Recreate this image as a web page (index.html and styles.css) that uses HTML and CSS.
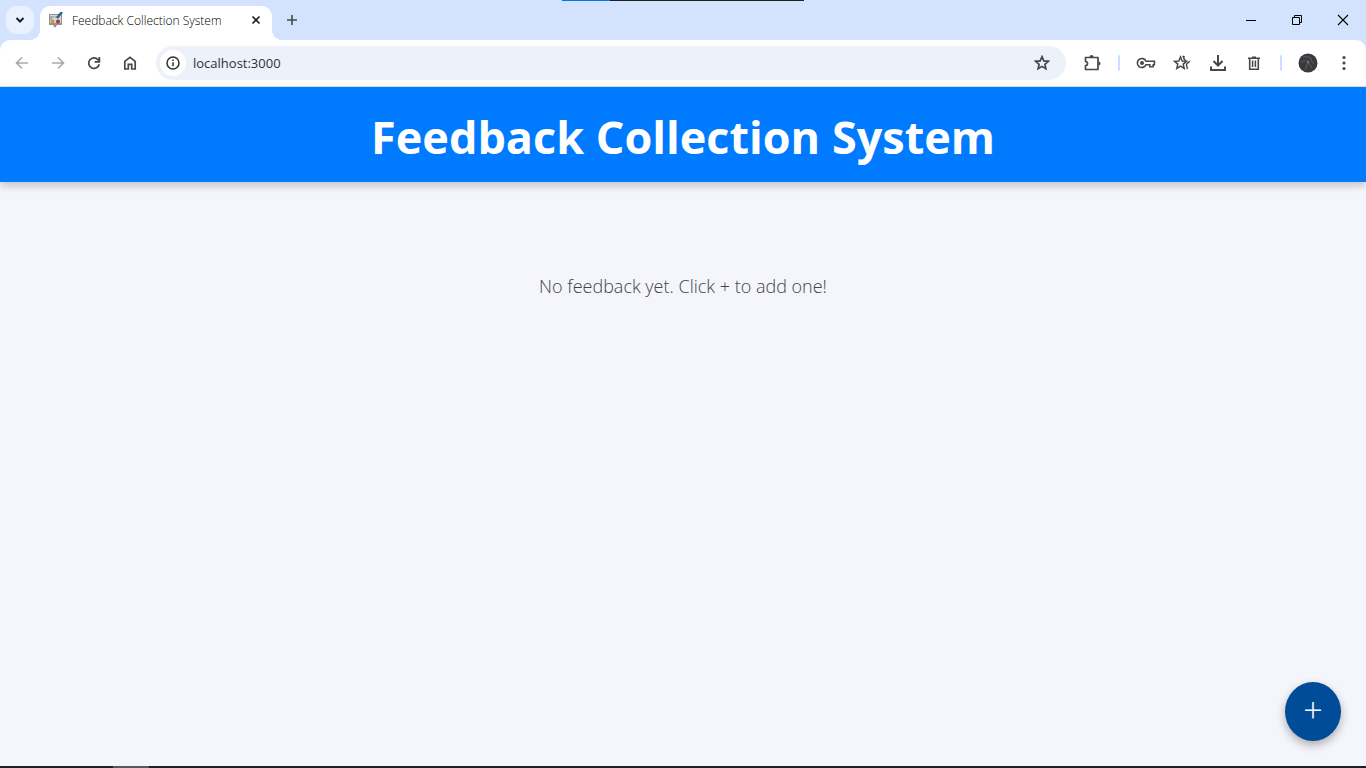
FILE: index.html
```
<!DOCTYPE html>
<html lang="en">
<head>
<meta charset="utf-8">
<title>Feedback Collection System</title>
<link rel="stylesheet" href="styles.css">
</head>
<body>
<div class="window">
  <div class="tab-strip">
    <button class="tab-search" aria-label="Search tabs"><svg width="10" height="8" viewBox="0 0 10 8"><path d="M1.5 2l3.5 3.5L8.500 2" fill="none" stroke="#1f2023" stroke-width="2"/></svg></button>
    <div class="tab">
      <svg class="favicon" width="16" height="16" viewBox="0 0 16 16"><path d="M1 2h13v11H9l-2 3-2-3H1z" fill="#909497"/><path d="M2 3h11v8H2z" fill="#d5d8da"/><path d="M2 5h4M2 7h2M7 5h3" stroke="#777d82"/><circle cx="4.500" cy="9.500" r="2" fill="#c99a30"/><circle cx="10" cy="9.500" r="2" fill="#b5303d"/><path d="M14 0L9 6" stroke="#236781" stroke-width="2.500"/></svg>
      <span class="tab-title">Feedback Collection System</span>
      <button class="tab-close" aria-label="Close tab"><svg width="10" height="10" viewBox="0 0 10 10"><path d="M1.500 1.500l7 7M8.500 1.500l-7 7" stroke="#1f2023" stroke-width="1.700"/></svg></button>
    </div>
    <button class="new-tab" aria-label="New tab"><svg width="12" height="12" viewBox="0 0 12 12"><path d="M6 1v10M1 6h10" stroke="#474747" stroke-width="1.600"/></svg></button>
    <div class="window-controls">
      <button aria-label="Minimize"><svg width="12" height="12" viewBox="0 0 12 12"><path d="M1 6.500h10" stroke="#000"/></svg></button>
      <button aria-label="Restore"><svg width="12" height="12" viewBox="0 0 12 12"><path d="M1.500 3.500h7v7h-7zM3.500 3.500v-2h7v7h-2" fill="none" stroke="#000"/></svg></button>
      <button aria-label="Close"><svg width="12" height="12" viewBox="0 0 12 12"><path d="M1 1l10 10M11 1L1 11" stroke="#000" stroke-width="1.100"/></svg></button>
    </div>
    <div class="top-progress"></div>
  </div>

  <div class="toolbar">
    <div class="nav">
      <button aria-label="Back"><svg width="16" height="16" viewBox="0 0 16 16"><path d="M14 8H3M8 2.500L2.500 8 8 13.500" fill="none" stroke="#a9a9a9" stroke-width="1.600"/></svg></button>
      <button aria-label="Forward"><svg width="16" height="16" viewBox="0 0 16 16"><path d="M2 8h11M8 2.500L13.500 8 8 13.500" fill="none" stroke="#a9a9a9" stroke-width="1.600"/></svg></button>
      <button aria-label="Reload"><svg width="16" height="16" viewBox="0 0 16 16"><path d="M13.200 9.200A5.300 5.300 0 1 1 12 4.600L13.200 6M13.400 2v4.800H8.600" fill="none" stroke="#474747" stroke-width="1.700"/></svg></button>
      <button aria-label="Home"><svg width="16" height="16" viewBox="0 0 16 16"><path d="M2.800 14V6.400L8 2.300l5.200 4.100V14H9.700V9.300H6.300V14z" fill="none" stroke="#474747" stroke-width="1.700"/></svg></button>
    </div>
    <div class="address">
      <button class="site-info" aria-label="Site information"><svg width="14" height="14" viewBox="0 0 14 14"><circle cx="7" cy="7" r="6" fill="none" stroke="#303134" stroke-width="1.500"/><path d="M7 6.200v4.100M7 3.500v1.500" stroke="#303134" stroke-width="1.500"/></svg></button>
      <input class="url" type="text" value="localhost:3000" aria-label="Address">
      <button class="bookmark" aria-label="Bookmark"><svg width="16" height="16" viewBox="0 0 16 16"><path d="M8 1.700l1.800 4.200 4.600.4-3.500 3 1 4.500L8 11.400l-3.900 2.400 1-4.500-3.500-3 4.600-.4z" fill="none" stroke="#474747" stroke-width="1.700"/></svg></button>
    </div>
    <div class="actions">
      <button aria-label="Extensions"><svg width="18" height="18" viewBox="0 0 18 18"><path d="M2.500 3.500H15v12H2.500v-3.800c2.700 0 2.700-4.200 0-4.200z" fill="none" stroke="#474747" stroke-width="1.700" stroke-linejoin="round"/><path d="M6.500 3a2 2 0 0 1 4 0zM15.500 7.500a2 2 0 0 1 0 4z" fill="#474747"/></svg></button>
      <span class="divider"></span>
      <button aria-label="Passwords"><svg width="20" height="16" viewBox="0 0 20 16"><path d="M10 6.200h8.400v3.600h-1.200v2h-3.400v-2H10a4.500 4.500 0 1 1 0-3.600z" fill="none" stroke="#474747" stroke-width="1.600"/><circle cx="6" cy="8" r="2" fill="#474747"/></svg></button>
      <button aria-label="Bookmarks"><svg width="18" height="18" viewBox="0 0 18 18"><path d="M7.500 3l1.700 4 4.300.3-3.300 2.800 1 4.300-3.700-2.300-3.700 2.300 1-4.300L1.500 7.300 5.800 7z" fill="none" stroke="#474747" stroke-width="1.500"/><path d="M9.800 1.800l1.500 3.500M16.800 7.300l-3.400 3 1 4.700M11 2v3l2 2" fill="none" stroke="#474747" stroke-width="1.400"/></svg></button>
      <button aria-label="Downloads"><svg width="18" height="18" viewBox="0 0 18 18"><path d="M9 1v10M4.500 7L9 11.500 13.500 7M2 12.500V16h14v-3.500" fill="none" stroke="#474747" stroke-width="2"/></svg></button>
      <button aria-label="Delete browsing data"><svg width="16" height="16" viewBox="0 0 16 16"><path d="M2 3.300h12M6 2.200h4M3.700 3.500v10.700h8.600V3.500" fill="none" stroke="#474747" stroke-width="1.600"/><path d="M6.600 5.500v6.500M9.400 5.500v6.500" stroke="#474747" stroke-width="1.500"/></svg></button>
      <span class="divider"></span>
      <button aria-label="Profile"><svg width="20" height="20" viewBox="0 0 20 20"><circle cx="10" cy="10" r="9.500" fill="#393a3e"/><path d="M5 4q5-2 9 2M3 9l5-2M10 10l-3 7M10 9l4 6M12 6l4 5" fill="none" stroke="#55565b" stroke-width="1.200"/><circle cx="10" cy="9" r="1.300" fill="#75767b"/></svg></button>
      <button aria-label="Menu"><svg width="4" height="16" viewBox="0 0 4 16"><g fill="#474747"><circle cx="2" cy="2.500" r="1.600"/><circle cx="2" cy="8" r="1.600"/><circle cx="2" cy="13.500" r="1.600"/></g></svg></button>
    </div>
  </div>

  <div class="page">
    <header class="page-header"><h1>Feedback Collection System</h1></header>
    <main><p class="empty">No feedback yet. Click + to add one!</p></main>
    <button class="fab" aria-label="Add feedback">+</button>
  </div>
  <div class="taskbar"></div>
</div>
</body>
</html>
```
FILE: styles.css
```
* { box-sizing: border-box; }
body { margin: 0; font-family: "Open Sans", "Noto Sans", sans-serif; }
button { display: flex; align-items: center; justify-content: center; padding: 0; border: 0; background: none; font: inherit; }
svg { display: block; flex: none; }
.window { display: flex; flex-direction: column; min-height: 100vh; background: #d3e3fd; }

.tab-strip { position: relative; display: flex; align-items: center; height: 40px; padding-left: 6px; }
.tab-search { width: 28px; height: 28px; border-radius: 10px; background: #e9f0fe; }
.tab { position: relative; display: flex; align-items: center; align-self: flex-end; width: 232px; height: 34px; margin-left: 6px; padding: 0 10px 6px 8px; border-radius: 10px 10px 0 0; background: #fff; }
.tab::before, .tab::after { content: ""; position: absolute; bottom: 0; width: 10px; height: 10px; }
.tab::before { right: 100%; background: radial-gradient(circle at 0 0, transparent 10px, #fff 10px); }
.tab::after { left: 100%; background: radial-gradient(circle at 100% 0, transparent 10px, #fff 10px); }
.tab-title { flex: 1; margin-left: 8px; color: #000; font-size: 12px; font-weight: 300; white-space: nowrap; }
.tab-close { width: 12px; height: 20px; }
.new-tab { width: 28px; height: 28px; margin-left: 6px; }
.window-controls { display: flex; margin-left: auto; }
.window-controls button { width: 46px; height: 40px; }
.top-progress { position: absolute; top: 0; left: 50%; width: 242px; height: 1px; transform: translateX(-50%); background: linear-gradient(to right, #0078d7 20%, #202020 20%); }

.toolbar { display: flex; align-items: center; height: 47px; padding: 0 4px; border-radius: 10px 10px 0 0; border-bottom: 1px solid #e0e3e8; background: #fff; }
.nav, .actions { display: flex; align-items: center; }
.nav button, .actions button { width: 36px; height: 34px; }
.address { display: flex; flex: 1; align-items: center; height: 34px; margin: 0 8px; padding: 0 12px 0 4px; border-radius: 17px; background: #ecf1fa; }
.site-info { width: 26px; height: 26px; border-radius: 50%; background: #fff; }
.url { flex: 1; min-width: 0; margin-left: 7px; padding: 0; border: 0; outline: 0; background: none; color: #303134; font-family: "Open Sans", sans-serif; font-size: 13px; }
.bookmark { width: 24px; height: 24px; }
.divider { width: 2px; height: 16px; margin: 0 8px; border-radius: 1px; background: #cbe0fd; }

.page { position: relative; display: flex; flex: 1; flex-direction: column; background: #f4f6fb; }
.page-header { padding: 18px 16px 14px; background: #007bff; box-shadow: 0 4px 8px rgba(0, 0, 0, 0.2); }
h1 { margin: 0; color: #fff; font-size: 45px; font-weight: 700; line-height: 63px; text-align: center; }
main { padding: 90px 16px; }
.empty { margin: 0; color: #444; font-size: 18px; font-weight: 300; line-height: 28px; text-align: center; }
.fab { position: absolute; right: 25px; bottom: 25px; width: 56px; height: 59px; padding-bottom: 4px; border-radius: 50%; background: #004c99; box-shadow: 0 4px 10px rgba(0, 0, 0, 0.3); color: #fff; font-size: 34px; font-weight: 300; line-height: 34px; }
.taskbar { height: 2px; background: linear-gradient(to right, transparent 113px, #59585b 113px, #59585b 149px, transparent 149px), #202024; }
```
